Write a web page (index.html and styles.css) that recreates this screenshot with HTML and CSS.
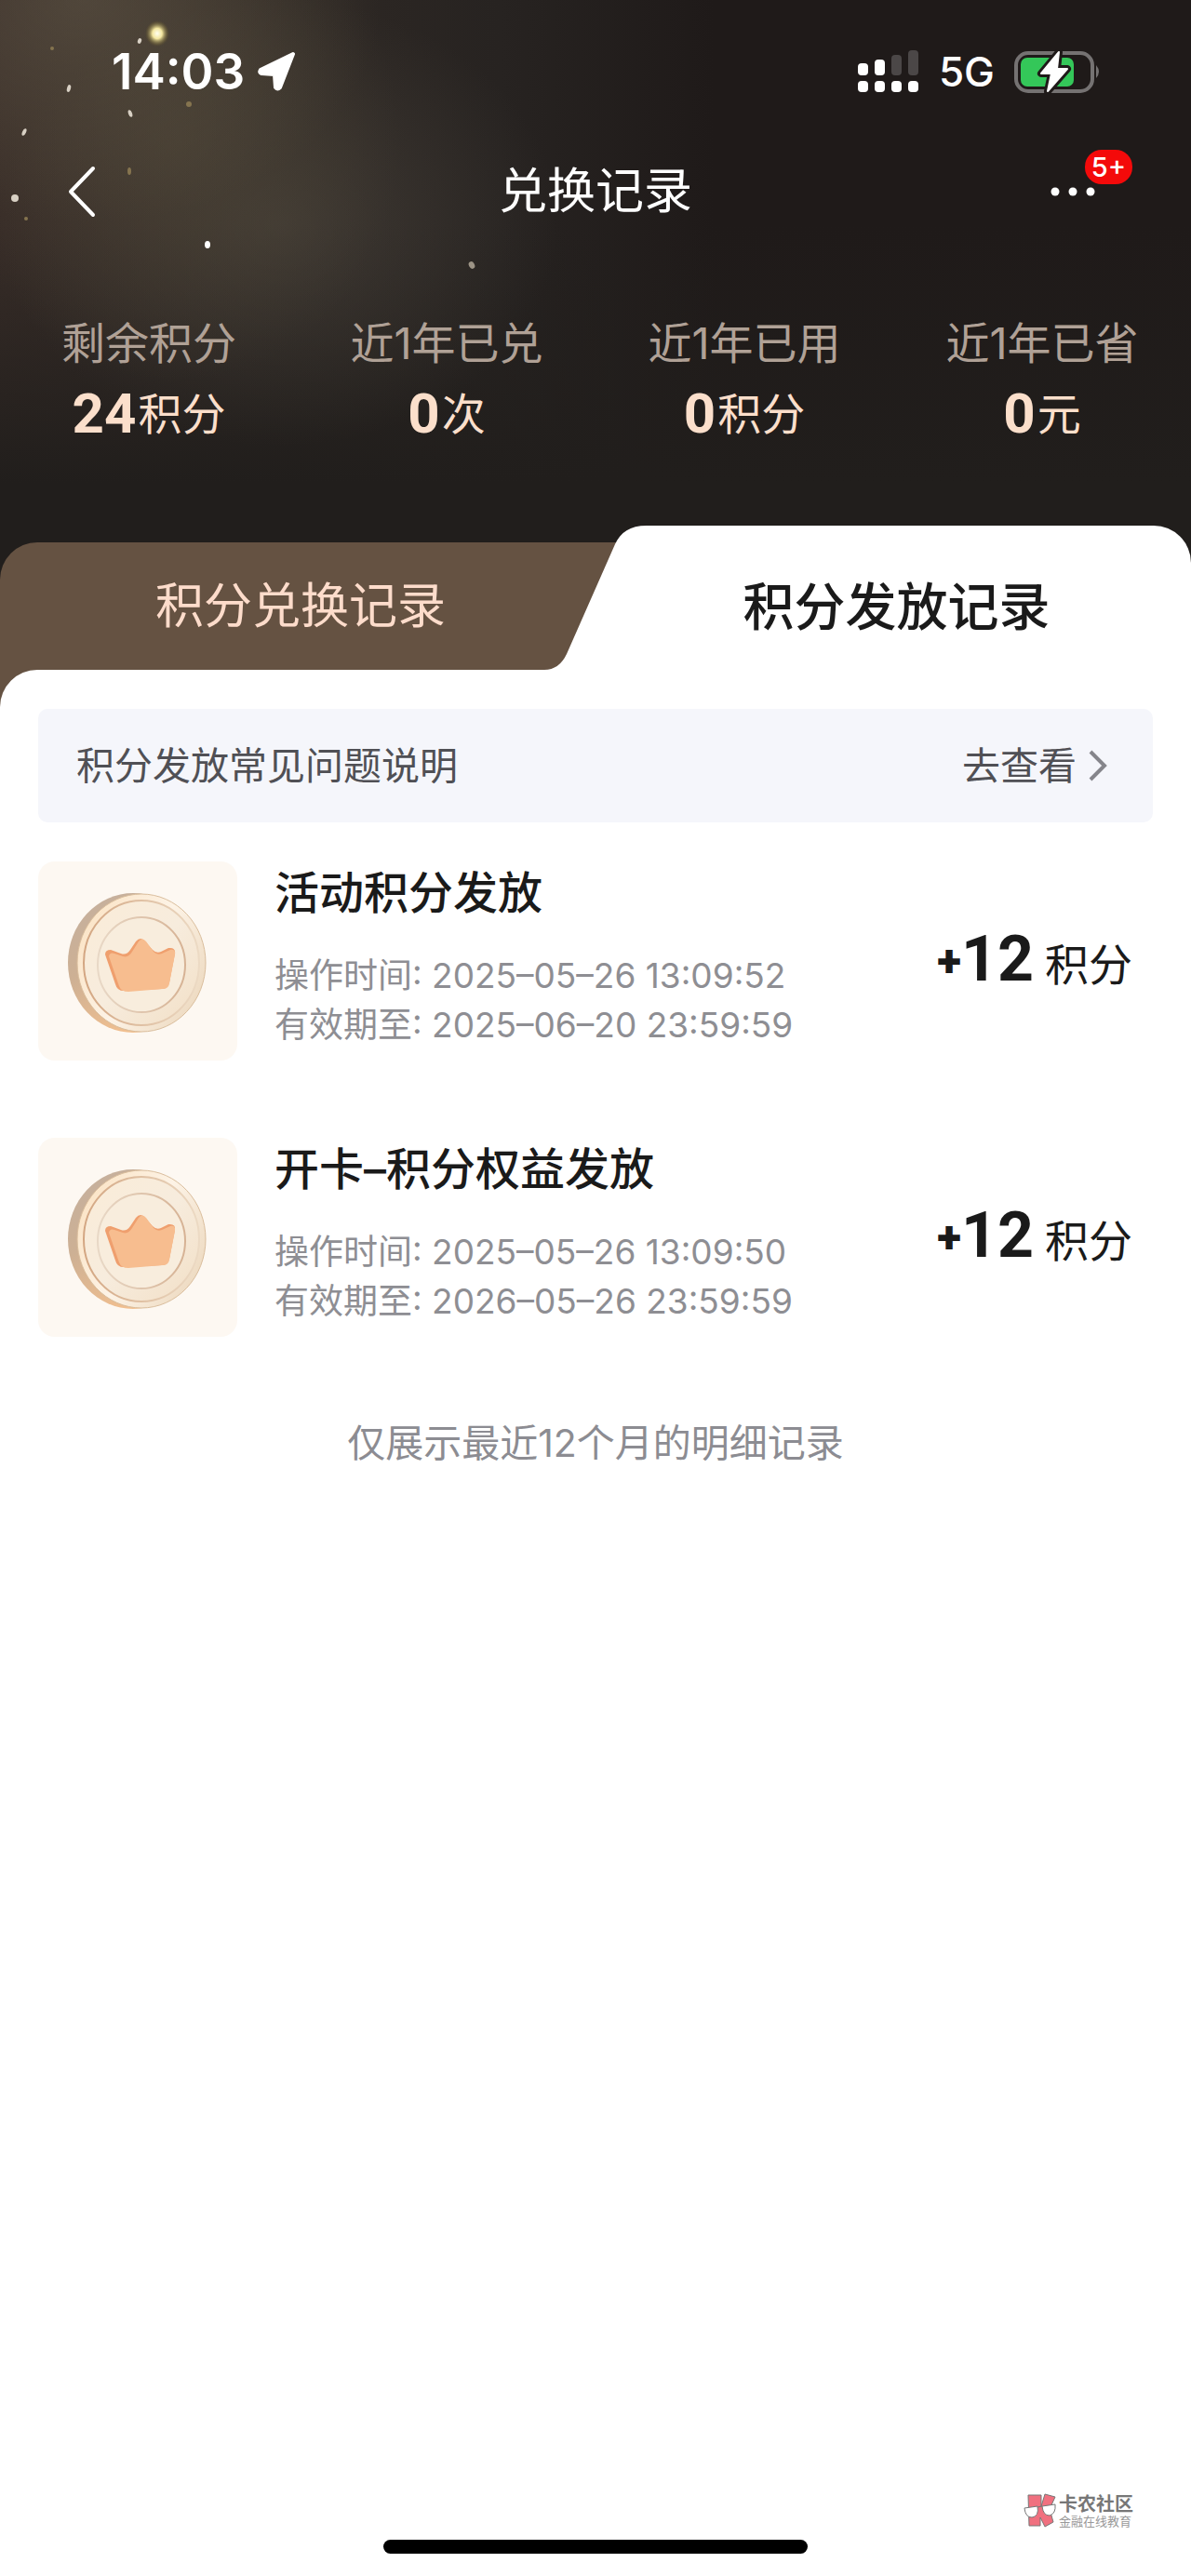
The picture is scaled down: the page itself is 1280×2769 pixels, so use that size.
FILE: index.html
```html
<!DOCTYPE html>
<html lang="zh-CN">
<head>
<meta charset="utf-8">
<meta name="viewport" content="width=device-width, initial-scale=1">
<title>兑换记录</title>
<link rel="stylesheet" href="styles.css">
</head>
<body>
<svg class="defs" width="0" height="0" aria-hidden="true">
  <defs>
    <linearGradient id="edge" x1="0" y1="0" x2="0.5" y2="1">
      <stop offset="0" stop-color="#c4b09f"/><stop offset="0.5" stop-color="#cdb094"/><stop offset="1" stop-color="#f3c08f"/>
    </linearGradient>
    <linearGradient id="rim" x1="0" y1="0.2" x2="1" y2="0.8">
      <stop offset="0" stop-color="#fbe3c4"/><stop offset="0.5" stop-color="#fdf3e6"/><stop offset="1" stop-color="#ecd8be"/>
    </linearGradient>
    <linearGradient id="face" x1="0" y1="0" x2="1" y2="1">
      <stop offset="0" stop-color="#faecd8"/><stop offset="0.5" stop-color="#f7ecdd"/><stop offset="1" stop-color="#f2dfc6"/>
    </linearGradient>
    <linearGradient id="groove" x1="0" y1="0.5" x2="1" y2="0.5">
      <stop offset="0" stop-color="#d3a682"/><stop offset="1" stop-color="#ecdac4"/>
    </linearGradient>
    <linearGradient id="ring" x1="0" y1="0.5" x2="1" y2="0.5">
      <stop offset="0" stop-color="#e8d8c6"/><stop offset="1" stop-color="#d6b294"/>
    </linearGradient>
    <symbol id="coin" viewBox="0 0 214 214">
      <ellipse cx="102" cy="109" rx="70" ry="75" fill="url(#edge)"/>
      <ellipse cx="111" cy="109" rx="69" ry="74" fill="url(#rim)" stroke="#d9bd9c" stroke-width="1"/>
      <ellipse cx="111" cy="109" rx="62" ry="67" fill="url(#face)" stroke="url(#groove)" stroke-width="2"/>
      <ellipse cx="111" cy="111" rx="47" ry="51" fill="#f8eddd" stroke="url(#ring)" stroke-width="2"/>
      <path d="M72 101q0-5 6-5l11 4q6 2 10-4l6-9q5-6 10 0l8 9q4 4 9 2l8-4q8-1 7 6l-6 31q-1 6-8 7l-39 2q-9 1-11-7z" transform="translate(0 -1)" fill="#ef9f6e"/>
      <path d="M76 102q1-5 6-3l9 3q6 2 10-5l7-11q4-5 8 0l8 11q4 4 9 2l9-4q6-1 5 5l-6 31q-1 6-7 6l-37 3q-8 0-10-6z" fill="#f7bd8f"/>
    </symbol>
  </defs>
</svg>

<header class="hero">
  <svg class="sparks" width="600" height="300" viewBox="0 0 600 300" aria-hidden="true">
    <defs><radialGradient id="glow"><stop offset="0" stop-color="#fffff0"/><stop offset="0.4" stop-color="#f4e7a0"/><stop offset="1" stop-color="#6b5b20" stop-opacity="0"/></radialGradient></defs>
    <ellipse cx="169" cy="36" rx="13" ry="14" fill="url(#glow)"/>
    <g fill="#d8d0c4">
      <ellipse cx="150" cy="44" rx="2" ry="3" transform="rotate(20 150 44)"/>
      <ellipse cx="74" cy="95" rx="2" ry="4" transform="rotate(15 74 95)"/>
      <ellipse cx="26" cy="142" rx="2" ry="4" transform="rotate(25 26 142)"/>
      <ellipse cx="140" cy="122" rx="2" ry="4" transform="rotate(-20 140 122)"/>
      <ellipse cx="16" cy="213" rx="4" ry="4"/>
      <ellipse cx="223" cy="263" rx="3" ry="4" fill="#fff"/>
      <ellipse cx="507" cy="285" rx="3" ry="4" fill="#9d9486" transform="rotate(-30 507 285)"/>
    </g>
    <g fill="#85744f">
      <circle cx="203" cy="112" r="3"/><ellipse cx="139" cy="184" rx="2" ry="4"/><circle cx="28" cy="235" r="2"/><circle cx="56" cy="52" r="2"/>
    </g>
  </svg>

  <div class="status">
    <div class="status-left">
      <span class="clock">14:03</span>
      <svg width="42" height="44" viewBox="0 0 42 44" aria-hidden="true"><path d="M38 3 L3 20 Q1 23 4 24 L18 25 L19 39 Q21 42 24 39 Z" fill="#fff" stroke="#fff" stroke-width="4" stroke-linejoin="round"/></svg>
    </div>
    <div class="status-right">
      <svg width="66" height="46" viewBox="0 0 66 46" aria-hidden="true">
        <g fill="#fff"><rect x="0" y="14" width="11" height="13" rx="4"/><rect x="18" y="10" width="11" height="17" rx="4"/><rect x="0" y="33" width="11" height="12" rx="4"/><rect x="18" y="33" width="11" height="12" rx="4"/><rect x="36" y="33" width="11" height="12" rx="4"/><rect x="54" y="33" width="11" height="12" rx="4"/></g>
        <g fill="#4b4747"><rect x="36" y="5" width="11" height="22" rx="4"/><rect x="54" y="0" width="11" height="27" rx="4"/></g>
      </svg>
      <span class="network">5G</span>
      <svg width="94" height="48" viewBox="0 0 94 48" aria-hidden="true">
        <rect x="2" y="4" width="82" height="41" rx="13" fill="none" stroke="#757272" stroke-width="4"/>
        <rect x="7" y="9" width="57" height="31" rx="7" fill="#34c759"/>
        <path d="M88 17q6 7 0 14z" fill="#757272"/>
        <path d="M48 3 L29 26 H40 L36 45 L57 21 H46 Z" fill="#fff" stroke="#1f1a19" stroke-width="8" stroke-linejoin="round"/>
        <path d="M48 3 L29 26 H40 L36 45 L57 21 H46 Z" fill="#fff" stroke="#fff" stroke-width="2" stroke-linejoin="round"/>
      </svg>
    </div>
  </div>

  <nav class="nav">
    <button class="icon-btn" type="button" aria-label="返回">
      <svg width="32" height="56" viewBox="0 0 32 56"><path d="M28 3 L4 28 L28 53" fill="none" stroke="#fff" stroke-width="4" stroke-linecap="round" stroke-linejoin="round"/></svg>
    </button>
    <h1 class="title">兑换记录</h1>
    <button class="icon-btn more" type="button" aria-label="更多">
      <svg width="50" height="12" viewBox="0 0 50 12"><g fill="#fff"><circle cx="6" cy="6" r="4.5"/><circle cx="25" cy="6" r="4.5"/><circle cx="44" cy="6" r="4.5"/></g></svg>
      <span class="badge">5+</span>
    </button>
  </nav>

  <dl class="stats">
    <div class="stat"><dt>剩余积分</dt><dd><b>24</b>积分</dd></div>
    <div class="stat"><dt>近1年已兑</dt><dd><b>0</b>次</dd></div>
    <div class="stat"><dt>近1年已用</dt><dd><b>0</b>积分</dd></div>
    <div class="stat"><dt>近1年已省</dt><dd><b>0</b>元</dd></div>
  </dl>

  <div class="tabs" role="tablist">
    <button class="tab tab-idle" type="button" role="tab" aria-selected="false">积分兑换记录</button>
    <button class="tab tab-active" type="button" role="tab" aria-selected="true">
      <svg width="110" height="155" viewBox="0 0 110 155" aria-hidden="true"><path d="M110 0 C92 0 82 7 76 20 L24 138 Q16 155 0 155 H110 Z" fill="#fff"/></svg>
      <span class="tab-text">积分发放记录</span>
    </button>
  </div>
</header>

<main class="panel">
  <a class="notice" href="#faq">
    <span>积分发放常见问题说明</span>
    <span class="go">去查看
      <svg width="20" height="34" viewBox="0 0 20 34" aria-hidden="true"><path d="M2 2 L17 17 L2 32" fill="none" stroke="#85858b" stroke-width="4"/></svg>
    </span>
  </a>

  <ul class="records">
    <li class="record">
      <svg class="thumb" aria-hidden="true"><use href="#coin"/></svg>
      <div class="info">
        <h2>活动积分发放</h2>
        <p>操作时间: 2025–05–26 13:09:52</p>
        <p>有效期至: 2025–06–20 23:59:59</p>
      </div>
      <div class="amount"><span class="plus">+</span><b>12</b><span class="unit">积分</span></div>
    </li>
    <li class="record">
      <svg class="thumb" aria-hidden="true"><use href="#coin"/></svg>
      <div class="info">
        <h2>开卡–积分权益发放</h2>
        <p>操作时间: 2025–05–26 13:09:50</p>
        <p>有效期至: 2026–05–26 23:59:59</p>
      </div>
      <div class="amount"><span class="plus">+</span><b>12</b><span class="unit">积分</span></div>
    </li>
  </ul>

  <p class="end-note">仅展示最近12个月的明细记录</p>
</main>

<footer class="footer">
  <div class="brand">
    <svg width="36" height="38" viewBox="0 0 36 38" aria-hidden="true">
      <path d="M5 2H19V14L23 1L34 4L28 17L32 31L23 36L18 26V35H6Z" fill="#f0707f" stroke="#777" stroke-linejoin="round"/>
      <path d="M1 16L15 14Q17 25 9 26Q2 26 1 16Z" fill="#fff" stroke="#777"/><path d="M20 14L34 12Q35 22 28 24Q21 24 20 14Z" fill="#fff" stroke="#777"/><path d="M15 15L20 14" stroke="#777"/>
    </svg>
    <div class="brand-text"><strong>卡农社区</strong><small>金融在线教育</small></div>
  </div>
  <div class="home-bar"></div>
</footer>
</body>
</html>
```
FILE: styles.css
```css
* { box-sizing: border-box; }

body {
  margin: 0;
  min-height: 100vh;
  display: flex;
  flex-direction: column;
  background: #fff;
  color: #1a1a1a;
  font-family: Inter, "Noto Sans CJK SC", sans-serif;
}

h1, h2, p, dl, dd, ul { margin: 0; padding: 0; }
button { border: 0; padding: 0; background: none; color: inherit; font: inherit; cursor: pointer; }
svg { display: block; flex: none; }
.defs { position: absolute; }

.hero {
  position: relative;
  background:
    radial-gradient(ellipse 320px 240px at 90px 0, rgba(108, 98, 80, 0.45), rgba(108, 98, 80, 0.2) 55%, transparent),
    radial-gradient(ellipse 240px 260px at 190px 150px, rgba(90, 80, 58, 0.35), rgba(90, 80, 58, 0.18) 50%, transparent),
    radial-gradient(ellipse 300px 240px at 300px 240px, rgba(90, 84, 74, 0.4), rgba(90, 84, 74, 0.2) 50%, transparent),
    linear-gradient(to bottom, rgba(32, 29, 27, 0) 240px, #211e1c 520px),
    linear-gradient(to right, #382d28 0, #2e2824 25%, #272321 42%, #1f1a19 60%, #1f1a19 100%);
}
.hero > .sparks { position: absolute; top: 0; left: 0; }

.status {
  display: flex;
  justify-content: space-between;
  align-items: center;
  height: 154px;
  padding: 0 96px 0 120px;
  color: #fff;
}
.status-left { display: flex; align-items: center; gap: 14px; }
.status-right { display: flex; align-items: center; gap: 21px; }
.clock { font-size: 53px; font-weight: 600; line-height: 64px; }
.network { font-size: 44px; font-weight: 500; line-height: 52px; }

.nav {
  display: grid;
  grid-template-columns: 1fr auto 1fr;
  align-items: center;
  height: 104px;
  padding: 0 72px;
  color: #fff;
}
.title { font-size: 52px; font-weight: 400; line-height: 74px; }
.icon-btn { justify-self: start; display: flex; align-items: center; height: 72px; }
.more { position: relative; justify-self: end; width: 80px; }
.badge {
  position: absolute;
  top: -9px;
  right: -9px;
  padding: 0 7px;
  border-radius: 18px;
  background: #f40a0a;
  font-size: 29px;
  font-weight: 500;
  line-height: 37px;
}

.stats { display: grid; grid-template-columns: repeat(4, 1fr); padding: 75px 0 82px; text-align: center; }
.stat { display: flex; flex-direction: column; gap: 2px; }
.stat dt { color: #b0a196; font-size: 47px; line-height: 72px; }
.stat dd { display: flex; justify-content: center; align-items: center; color: #fbdfcb; font-size: 47px; line-height: 76px; }
.stat b { margin-right: 2px; font-family: Roboto, sans-serif; font-size: 60px; font-weight: 700; }

.tabs { display: grid; grid-template-columns: 1fr 1fr; align-items: end; }
.tab-idle {
  height: 177px;
  margin: 0 -32px -40px 0;
  padding: 0 26px 40px 0;
  border-radius: 40px 0 0 0;
  background: #655242;
  color: #fddccb;
  font-size: 52px;
  line-height: 72px;
}
.tab-active { position: relative; display: flex; align-items: center; height: 155px; margin-left: -55px; }
.tab-text {
  flex: 1;
  height: 155px;
  padding-right: 48px;
  border-radius: 0 40px 0 0;
  background: #fff;
  font-size: 55px;
  font-weight: 500;
  line-height: 174px;
}

.panel { position: relative; flex: 1; padding: 42px 41px 0; border-radius: 40px 0 0 0; background: #fff; }
.notice {
  display: flex;
  justify-content: space-between;
  align-items: center;
  height: 122px;
  padding: 0 49px 0 41px;
  border-radius: 10px;
  background: #f5f6fb;
  color: #505055;
  font-size: 41px;
  line-height: 56px;
  text-decoration: none;
}
.go { display: flex; align-items: center; gap: 13px; }

.records { display: flex; flex-direction: column; gap: 83px; padding-top: 42px; list-style: none; }
.record { display: flex; align-items: flex-start; gap: 40px; padding-right: 22px; }
.thumb { width: 214px; height: 214px; border-radius: 18px; background: #fdf8f2; }
.info { flex: 1; }
.info h2 { margin-bottom: 28px; font-size: 48px; font-weight: 500; line-height: 68px; }
.info p { color: #8e8e93; font-size: 37px; line-height: 53px; }
.amount { display: flex; align-items: baseline; padding-top: 63px; line-height: 84px; }
.amount b { font-family: Roboto, sans-serif; font-size: 68px; font-weight: 700; }
.plus { align-self: center; font-family: Roboto, sans-serif; font-size: 48px; font-weight: 900; }
.unit { margin-left: 12px; font-size: 47px; }

.end-note { padding-top: 82px; color: #8c8c92; font-size: 41px; line-height: 64px; text-align: center; }

.footer { display: flex; flex-direction: column; gap: 12px; padding-bottom: 24px; }
.brand { display: flex; align-items: center; align-self: flex-end; gap: 2px; margin-right: 62px; }
.brand-text { display: flex; flex-direction: column; color: #777; }
.brand-text strong { font-size: 20px; line-height: 22px; }
.brand-text small { color: #999; font-size: 13px; line-height: 15px; }
.home-bar { align-self: center; width: 456px; max-width: 60%; height: 15px; border-radius: 8px; background: #000; }
```
